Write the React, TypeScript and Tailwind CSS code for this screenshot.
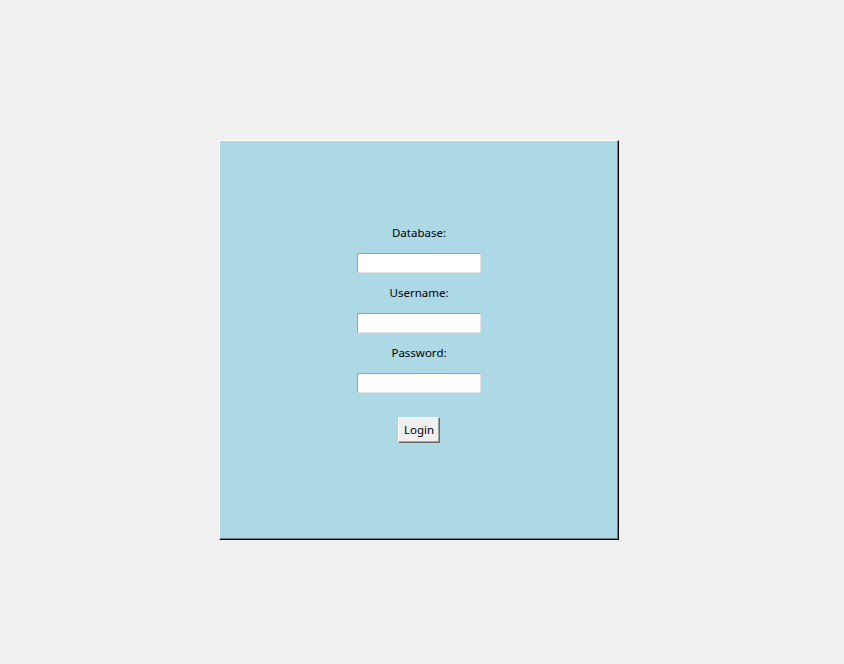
export default function App() {
  const fields = ['Database:', 'Username:', 'Password:'];

  return (
    <div className="min-h-[664px] w-full bg-[#f0f0f0] pl-[219px] pt-[140px] font-['Segoe_UI','Noto_Sans',sans-serif] text-[11.5px] text-black">
      {/* login frame, raised border */}
      <div className="box-border flex h-[400px] w-[400px] flex-col items-center border border-t-white border-l-white border-r-black border-b-black bg-[#add8e6] pt-[84px] shadow-[inset_-1px_-1px_0_#68828a]">
        {fields.map((label) => (
          <div key={label} className="flex flex-col items-center">
            <div className="h-[16px] leading-[16px]">{label}</div>
            <input
              type="text"
              className="mt-[12px] mb-[12px] box-border h-[20px] w-[124px] border border-t-[#a0a0a0] border-l-[#a0a0a0] border-r-[#e3e3e3] border-b-[#e3e3e3] bg-white outline-none"
            />
          </div>
        ))}
        <button className="mt-[12px] box-border h-[26px] w-[42px] border border-t-white border-l-white border-r-[#696969] border-b-[#696969] bg-[#f0f0f0] text-[11.5px] leading-none shadow-[inset_-1px_-1px_0_#a0a0a0]">
          Login
        </button>
      </div>
    </div>
  );
}
